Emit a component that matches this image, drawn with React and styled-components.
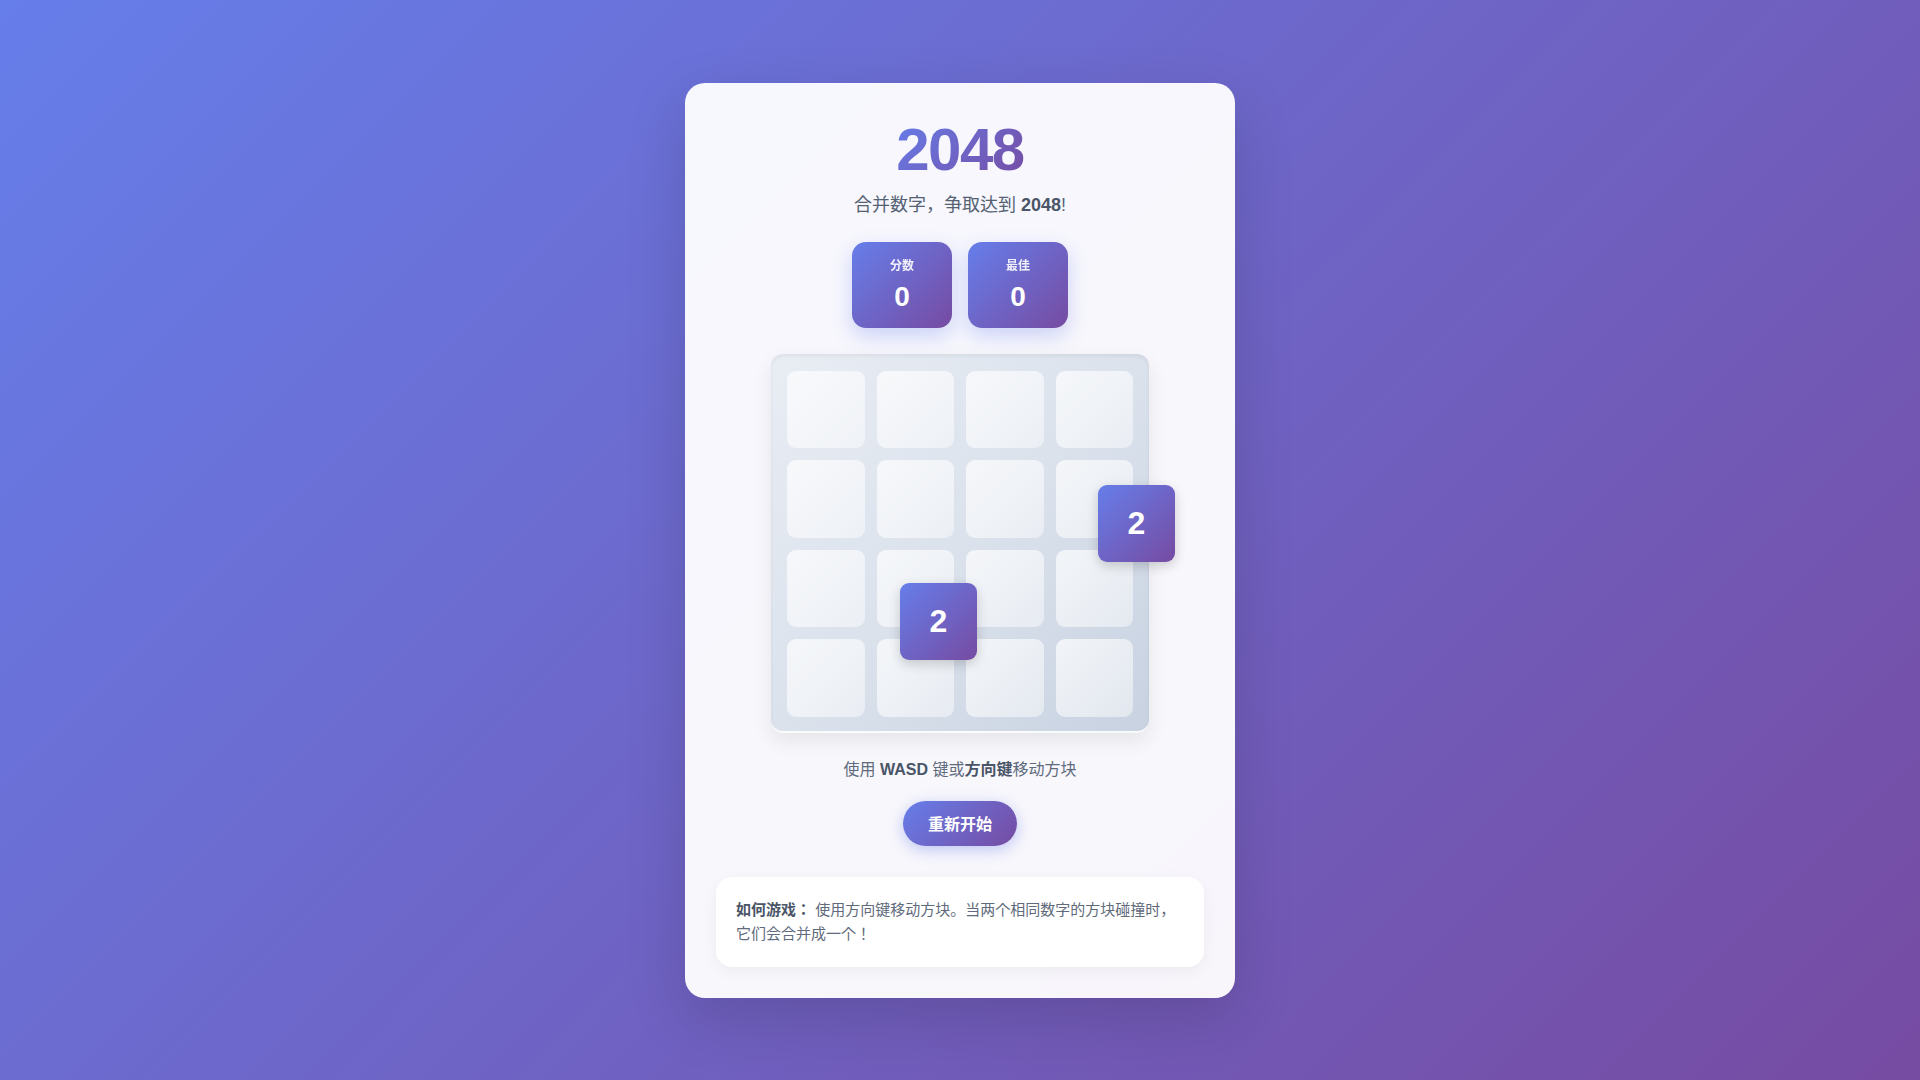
import React from "react";
import styled, { createGlobalStyle } from "styled-components";

const GlobalStyle = createGlobalStyle`
  * {
    box-sizing: border-box;
  }
  html, body {
    margin: 0;
    padding: 0;
  }
  body {
    min-height: 100vh;
    font-family: "Liberation Sans", "Noto Sans CJK JP", sans-serif;
    background: linear-gradient(135deg, #667eea 0%, #764ba2 100%);
  }
`;

const Page = styled.div`
  width: 100%;
  min-height: 100vh;
  display: flex;
  justify-content: center;
  align-items: center;
`;

const Card = styled.div`
  width: 550px;
  padding: 31px;
  border-radius: 20px;
  background: rgba(255, 255, 255, 0.95);
  box-shadow: 0 20px 60px rgba(0, 0, 0, 0.15);
  display: flex;
  flex-direction: column;
  align-items: center;
`;

const Title = styled.h1`
  margin: 0;
  font-size: 60px;
  line-height: 72px;
  font-weight: 700;
  letter-spacing: -1.5px;
  background: linear-gradient(135deg, #667eea 0%, #764ba2 100%);
  -webkit-background-clip: text;
  background-clip: text;
  color: transparent;
`;

const Subtitle = styled.p`
  margin: 6px 0 0;
  font-size: 18px;
  line-height: 27px;
  color: #556274;
  strong {
    color: #4a5568;
    font-weight: 700;
  }
`;

const Scores = styled.div`
  margin-top: 23px;
  display: flex;
  gap: 16px;
`;

const ScoreBox = styled.div`
  width: 100px;
  height: 86px;
  padding-top: 15px;
  border-radius: 14px;
  background: linear-gradient(135deg, #667eea 0%, #764ba2 100%);
  box-shadow: 0 8px 20px rgba(102, 126, 234, 0.3);
  display: flex;
  flex-direction: column;
  align-items: center;
  color: #fff;
`;

const ScoreLabel = styled.div`
  font-size: 12px;
  line-height: 18px;
  font-weight: 700;
  opacity: 0.9;
`;

const ScoreValue = styled.div`
  margin-top: 5px;
  font-size: 28px;
  line-height: 34px;
  font-weight: 700;
`;

const Board = styled.div`
  position: relative;
  margin-top: 26px;
  width: 378px;
  height: 379px;
  padding: 17px 16px 16px;
  border-radius: 12px;
  background: linear-gradient(135deg, #e9edf4 0%, #dbe2ec 50%, #c8d2e1 100%);
  box-shadow: inset 0 2px 4px rgba(0, 0, 0, 0.06), inset 0 -2px 0 rgba(255, 255, 255, 0.9),
    0 8px 20px rgba(0, 0, 0, 0.08);
  display: grid;
  grid-template-columns: repeat(4, 1fr);
  grid-template-rows: repeat(4, 1fr);
  gap: 12px;
`;

const Cell = styled.div`
  border-radius: 9px;
  background: linear-gradient(135deg, rgba(255, 255, 255, 0.7) 0%, rgba(255, 255, 255, 0.45) 100%);
`;

const Tile = styled.div`
  position: absolute;
  width: 77px;
  height: 77px;
  border-radius: 9px;
  background: linear-gradient(135deg, #667eea 0%, #764ba2 100%);
  box-shadow: 0 4px 12px rgba(0, 0, 0, 0.18);
  display: flex;
  justify-content: center;
  align-items: center;
  color: #fff;
  font-size: 32px;
  font-weight: 700;
`;

const Hint = styled.p`
  margin: 25px 0 0;
  font-size: 16px;
  line-height: 24px;
  color: #5f6b7c;
  strong {
    color: #4a5568;
    font-weight: 700;
  }
`;

const RestartButton = styled.button`
  margin-top: 19px;
  height: 45px;
  padding: 0 25px;
  border: none;
  border-radius: 999px;
  background: linear-gradient(135deg, #667eea 0%, #764ba2 100%);
  box-shadow: 0 4px 15px rgba(102, 126, 234, 0.4);
  color: #fff;
  font-family: inherit;
  font-size: 16px;
  font-weight: 700;
  cursor: pointer;
`;

const InfoBox = styled.div`
  margin-top: 31px;
  width: 100%;
  padding: 21px 20px;
  border-radius: 16px;
  background: #fff;
  box-shadow: 0 4px 15px rgba(0, 0, 0, 0.05);
  font-size: 15px;
  line-height: 24px;
  color: #5f6b7c;
  strong {
    color: #4a5568;
  }
`;

const tiles = [
  { id: 1, value: 2, left: 129, top: 229 },
  { id: 2, value: 2, left: 327, top: 131 },
];

export default function App() {
  return (
    <>
      <GlobalStyle />
      <Page>
        <Card>
          <Title>2048</Title>
          <Subtitle>
            合并数字，争取达到 <strong>2048</strong>!
          </Subtitle>
          <Scores>
            <ScoreBox>
              <ScoreLabel>分数</ScoreLabel>
              <ScoreValue>0</ScoreValue>
            </ScoreBox>
            <ScoreBox>
              <ScoreLabel>最佳</ScoreLabel>
              <ScoreValue>0</ScoreValue>
            </ScoreBox>
          </Scores>
          <Board>
            {Array.from({ length: 16 }).map((_, i) => (
              <Cell key={i} />
            ))}
            {tiles.map(t => (
              <Tile key={t.id} style={{ left: t.left, top: t.top }}>
                {t.value}
              </Tile>
            ))}
          </Board>
          <Hint>
            使用 <strong>WASD</strong> 键或<strong>方向键</strong>移动方块
          </Hint>
          <RestartButton>重新开始</RestartButton>
          <InfoBox>
            <strong>如何游戏：</strong> 使用方向键移动方块。当两个相同数字的方块碰撞时，它们会合并成一个！
          </InfoBox>
        </Card>
      </Page>
    </>
  );
}
